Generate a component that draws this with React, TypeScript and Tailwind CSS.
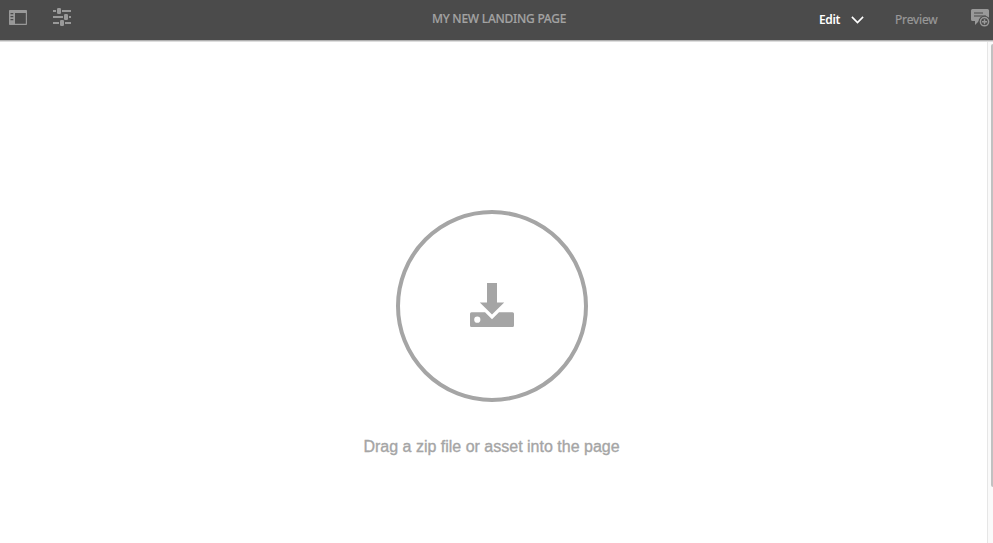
const PanelIcon = () => (
  <svg width="18" height="15" viewBox="0 0 18 15" className="mt-[2px] shrink-0" fill="#999999">
    <path fillRule="evenodd" d="M0.800 0h16.400a0.800 0.800 0 0 1 0.800 0.800v13.400a0.800 0.800 0 0 1-0.800 0.800H0.800a0.800 0.800 0 0 1-0.800-0.800V0.800a0.800 0.800 0 0 1 0.800-0.800zM6 3v10.800h10.800V3zM1.500 3v1.200h2.800V3zM1.500 6v1.200h2.800V6zM1.500 9v1.200h2.800V9z" />
  </svg>
);

const SlidersIcon = () => (
  <svg width="18" height="18" viewBox="0 0 18 18" className="shrink-0" fill="#999999">
    <rect x="0" y="2" width="3" height="2" />
    <rect x="4" y="0" width="4" height="6" rx="1.200" />
    <rect x="9" y="2" width="9" height="2" />
    <rect x="0" y="8" width="10" height="2" />
    <rect x="11" y="6" width="4" height="6" rx="1.200" />
    <rect x="16" y="8" width="2" height="2" />
    <rect x="0" y="14" width="6" height="2" />
    <rect x="7" y="12" width="4" height="6" rx="1.200" />
    <rect x="12" y="14" width="6" height="2" />
  </svg>
);

const AnnotateIcon = () => (
  <svg width="19" height="19" viewBox="0 0 19 19" className="mt-[2px] shrink-0">
    <path fill="#999999" d="M1.500 0h15A1.500 1.500 0 0 1 18 1.500V12H8l-4 4v-4H1.500A1.500 1.500 0 0 1 0 10.500v-9A1.500 1.500 0 0 1 1.500 0z" />
    <path stroke="#4b4b4b" strokeWidth="1.200" d="M3 4h9M3 7h12" />
    <circle cx="13.500" cy="12.700" r="6" fill="#4b4b4b" />
    <circle cx="13.500" cy="12.700" r="4.100" fill="none" stroke="#999999" strokeWidth="1.500" />
    <path stroke="#999999" strokeWidth="1.500" d="M13.500 10.200v5M11 12.700h5" />
  </svg>
);

const DownloadIcon = () => (
  <svg width="44" height="44" viewBox="0 0 44 44" fill="#a5a5a5">
    <path d="M17 0h10v19.500h7.200L22 31.600 9.800 19.500H17z" />
    <path fillRule="evenodd" d="M1.500 29.300H15l7 7 7-7h13.500a1.500 1.500 0 0 1 1.500 1.500v11.700a1.500 1.500 0 0 1-1.500 1.500h-41A1.500 1.500 0 0 1 0 42.500V30.800a1.500 1.500 0 0 1 1.500-1.500zM7.300 33.600a3.100 3.100 0 1 0 0 6.200 3.100 3.100 0 0 0 0-6.200z" />
  </svg>
);

export default function App() {
  return (
    <div className="flex h-[543px] w-[993px] flex-col overflow-hidden bg-white">
      <header className="flex h-[40px] shrink-0 items-center bg-[#4b4b4b] pb-[5px] font-['Noto_Sans',sans-serif] text-[12px] leading-4">
        <div className="flex w-[432px] shrink-0 items-start gap-[26px] self-start pl-[9px] pt-2">
          <PanelIcon />
          <SlidersIcon />
        </div>
        <h1 className="mt-[3px] w-[387px] shrink-0 whitespace-nowrap font-medium tracking-[-0.26px] text-[#a3a3a3] [-webkit-text-stroke:0.15px_#a3a3a3]">
          MY NEW LANDING PAGE
        </h1>
        <button className="mt-[4px] flex w-[76px] shrink-0 items-center gap-3 font-semibold tracking-[-0.4px] text-white">
          <span className="w-[20px]">Edit</span>
          <svg width="13" height="8" viewBox="0 0 13 8" fill="none" stroke="#fff" strokeWidth="1.600">
            <path d="M0.900 0.900l5.600 5.600L12.100 0.900" />
          </svg>
        </button>
        <span className="mt-[4px] w-[76px] shrink-0 tracking-[-0.15px] text-[#999999] [-webkit-text-stroke:0.2px_#999999]">Preview</span>
        <AnnotateIcon />
      </header>
      <div className="h-[2px] shrink-0 border-t border-[#b0b0b0] bg-[#dddddd]" />
      <div className="flex min-h-0 flex-1">
        <main className="flex w-[987px] shrink-0 flex-col items-center pl-[1px] pr-[4px] pt-[168px]">
          <div className="flex size-[192px] items-center justify-center rounded-full border-4 border-[#a5a5a5] pb-[2px]">
            <DownloadIcon />
          </div>
          <p className="mt-[33px] whitespace-nowrap pr-px font-['Liberation_Sans',Arial,sans-serif] text-[16px] leading-6 text-[#a5a5a5] [-webkit-text-stroke:0.35px_#a5a5a5]">
            Drag a zip file or asset into the page
          </p>
        </main>
        <div className="flex flex-1 justify-end border-l border-[#e6e6e6] bg-[#fafafa] pt-[2px]">
          <div className="h-[443px] w-[2px] rounded-l-sm bg-[#c1c1c1]" />
        </div>
      </div>
    </div>
  );
}
